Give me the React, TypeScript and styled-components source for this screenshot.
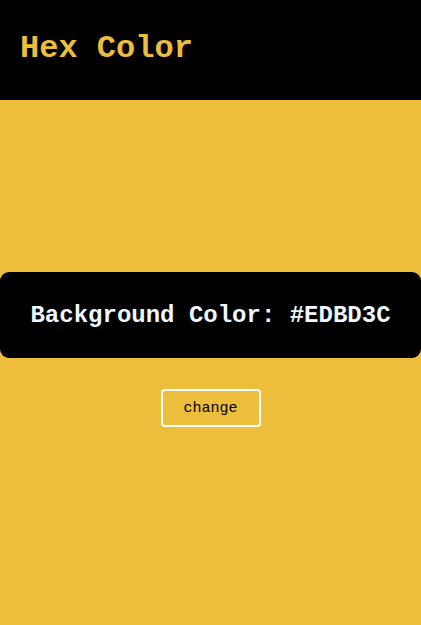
import React from "react";
import styled, { createGlobalStyle } from "styled-components";

const MONO = `"Courier New", "Nimbus Mono PS", "Nimbus Mono L", FreeMono, Courier, "Liberation Mono", monospace`;

const Global = createGlobalStyle`
  html, body { margin: 0; padding: 0; background: #EDBD3C; }
  body { font-family: ${MONO}; }
`;

const Page = styled.div`
  min-height: 625px;
  background: #EDBD3C;
  display: flex;
  flex-direction: column;
`;

const Header = styled.header`
  height: 100px;
  background: #000;
  display: flex;
  align-items: center;
  padding: 0 20px;
  box-sizing: border-box;
`;

const Title = styled.h1`
  margin: 0;
  font-family: ${MONO};
  font-size: 32px;
  font-weight: bold;
  color: #EDBD3C;
  position: relative;
  top: -2px;
`;

const Main = styled.main`
  display: flex;
  flex-direction: column;
  align-items: center;
  padding-top: 172px;
  gap: 31px;
`;

const ColorBox = styled.div`
  width: 100%;
  height: 86px;
  background: #000;
  border-radius: 9px;
  display: flex;
  align-items: center;
  justify-content: center;
`;

const ColorText = styled.h2`
  margin: 0;
  font-family: ${MONO};
  font-size: 24px;
  font-weight: bold;
  color: #f0f8ff;
`;

const ChangeButton = styled.button`
  width: 100px;
  height: 38px;
  background: transparent;
  border: 2px solid #fff;
  border-radius: 4px;
  font-family: ${MONO};
  font-size: 15px;
  color: #000;
  cursor: pointer;
  padding: 0;
`;

export default function App() {
  return (
    <Page>
      <Global />
      <Header>
        <Title>Hex Color</Title>
      </Header>
      <Main>
        <ColorBox>
          <ColorText>Background Color: #EDBD3C</ColorText>
        </ColorBox>
        <ChangeButton>change</ChangeButton>
      </Main>
    </Page>
  );
}
